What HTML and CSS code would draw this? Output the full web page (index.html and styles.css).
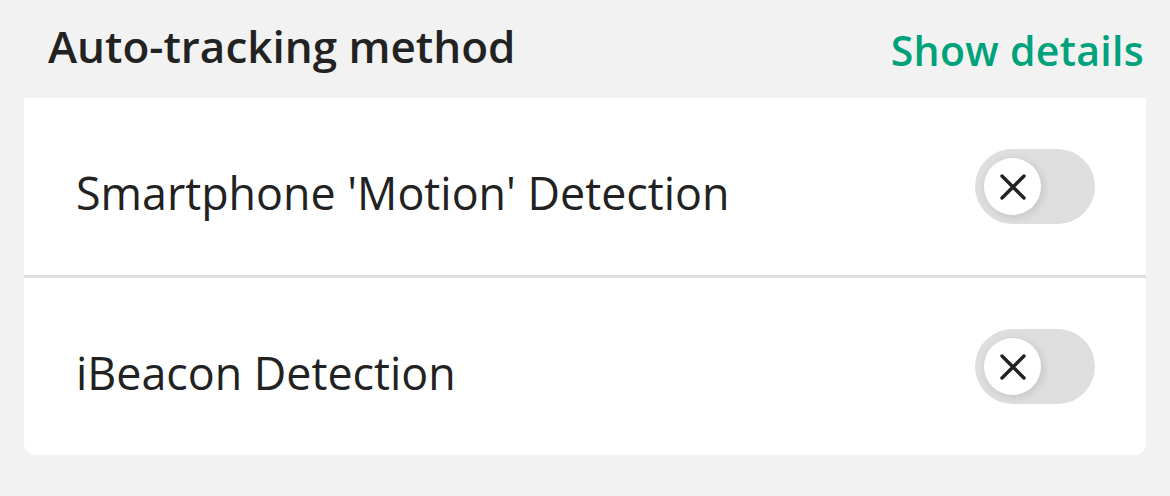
FILE: index.html
```html
<!DOCTYPE html>
<html>
<head>
<meta charset="utf-8">
<link rel="stylesheet" href="styles.css">
</head>
<body>
<div class="page">
  <div class="header">
    <h2 class="title">Auto-tracking method</h2>
    <a class="link">Show details</a>
  </div>
  <div class="card">
    <div class="row">
      <span class="label">Smartphone 'Motion' Detection</span>
      <div class="toggle"><div class="knob"><svg width="26" height="26" viewBox="0 0 26 26"><path d="M2 2 L24 24 M24 2 L2 24" stroke="#222" stroke-width="3.4" stroke-linecap="round" fill="none"/></svg></div></div>
    </div>
    <div class="row">
      <span class="label">iBeacon Detection</span>
      <div class="toggle"><div class="knob"><svg width="26" height="26" viewBox="0 0 26 26"><path d="M2 2 L24 24 M24 2 L2 24" stroke="#222" stroke-width="3.4" stroke-linecap="round" fill="none"/></svg></div></div>
    </div>
  </div>
</div>
</body>
</html>
```
FILE: styles.css
```css
html, body {
  margin: 0;
  padding: 0;
  background: #f2f2f2;
  font-family: "Open Sans", sans-serif;
}
.page {
  padding: 0 24px;
  width: 1122px;
}
.header {
  height: 98px;
  display: flex;
  justify-content: space-between;
  align-items: flex-start;
}
.title {
  margin: 14px 0 0 24px;
  font-size: 44px;
  font-weight: 600;
  color: #222;
  line-height: 64px;
}
.link {
  margin-top: 18px;
  margin-right: 2px;
  font-size: 41px;
  font-weight: 600;
  letter-spacing: 0.3px;
  color: #00a27b;
  line-height: 64px;
}
.card {
  background: #fff;
  border-radius: 0 0 12px 12px;
}
.row {
  height: 177px;
  display: flex;
  align-items: center;
  justify-content: space-between;
  padding: 0 51px 0 52px;
}
.row + .row {
  border-top: 3px solid #e0e0e0;
}
.label {
  margin-top: 12px;
  font-size: 44.8px;
  color: #222;
}
.toggle {
  width: 120px;
  height: 75px;
  border-radius: 38px;
  background: #dedede;
  display: flex;
  align-items: center;
  padding-left: 9px;
  box-sizing: border-box;
}
.knob {
  width: 57px;
  height: 57px;
  border-radius: 50%;
  background: #fff;
  box-shadow: 2px 2px 8px rgba(0,0,0,0.12);
  display: flex;
  align-items: center;
  justify-content: center;
}
.knob svg { display: block; }
```
